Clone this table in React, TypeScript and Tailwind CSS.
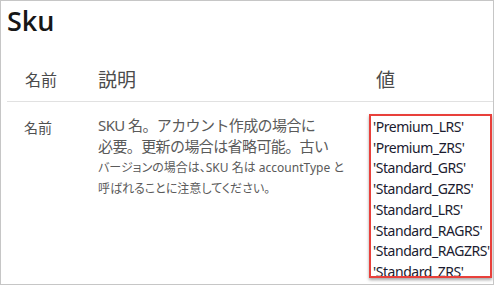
import React from "react";

const values = [
  "'Premium_LRS'",
  "'Premium_ZRS'",
  "'Standard_GRS'",
  "'Standard_GZRS'",
  "'Standard_LRS'",
  "'Standard_RAGRS'",
  "'Standard_RAGZRS'",
  "'Standard_ZRS'",
];

export default function App() {
  const jp = { fontFamily: '"Noto Sans", "Noto Sans CJK JP", sans-serif' };
  return (
    <div className="w-[494px] h-[285px] border border-[#c6c6c6] bg-white overflow-hidden" style={jp}>
      <h2 className="pl-[6px] pt-[1px] h-[40px] text-[27px] leading-[38px] font-semibold text-[#171717] font-['Open_Sans',sans-serif]">
        Sku
      </h2>
      <div className="ml-[6px]">
        <div className="flex items-end h-[61px] pb-[9px] border-b border-[#e1e1e1] text-[#4b4b4b]">
          <div className="w-[91px] pl-[18px] text-[16px] leading-[24px]">名前</div>
          <div className="w-[271px] text-[19px] leading-[24px]">説明</div>
          <div className="flex-1 pl-[7px] text-[19px] leading-[24px]">値</div>
        </div>
        <div className="flex pt-[13px]">
          <div className="w-[91px] pl-[17px] pt-[2px] text-[14px] leading-[21px] text-[#505050]">名前</div>
          <div className="w-[271px] pl-[0px] text-[#5a5a5a]">
            <div className="text-[15px] leading-[21px] tracking-[-0.6px]">SKU 名。アカウント作成の場合に</div>
            <div className="text-[15px] leading-[21px] tracking-[-0.6px]">必要。更新の場合は省略可能。古い</div>
            <div className="text-[12px] leading-[21px] [font-feature-settings:'palt']">
              バージョンの場合は、SKU 名は accountType と
            </div>
            <div className="text-[12px] leading-[21px] [font-feature-settings:'palt']">
              呼ばれることに注意してください。
            </div>
          </div>
          <div className="-mt-[1px] w-[123px] h-[164px] border-2 border-[#e8403b] shadow-[0_2px_3px_rgba(0,0,0,0.35)] overflow-hidden pl-[2px] pt-[1px]">
            {values.map((v) => (
              <div
                key={v}
                className="text-[14px] leading-[20.7px] text-[#1b1b2f] whitespace-nowrap font-['Noto_Sans',sans-serif] tracking-[-0.45px]"
              >
                {v}
              </div>
            ))}
          </div>
        </div>
      </div>
    </div>
  );
}
